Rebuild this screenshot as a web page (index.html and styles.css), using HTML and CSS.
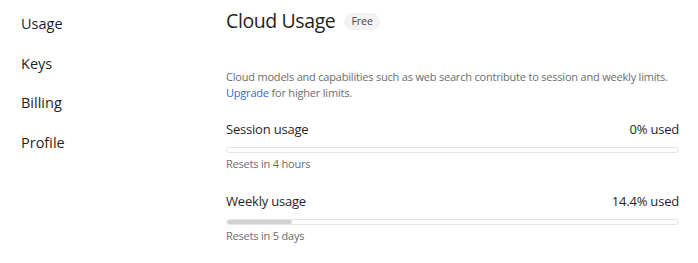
FILE: index.html
```html
<!DOCTYPE html>
<html lang="en">
<head>
  <meta charset="UTF-8" />
  <meta name="viewport" content="width=device-width, initial-scale=1.0"/>
  <title>Cloud Usage</title>
  <link rel="stylesheet" href="styles.css">
</head>
<body>
  <div class="layout">
    <nav class="sidebar">
      <a href="#" class="nav-item">Usage</a>
      <a href="#" class="nav-item">Keys</a>
      <a href="#" class="nav-item">Billing</a>
      <a href="#" class="nav-item">Profile</a>
    </nav>

    <main class="content">
      <div class="title-row">
        <h1>Cloud Usage</h1>
        <span class="badge">Free</span>
      </div>

      <p class="desc">
        Cloud models and capabilities such as web search contribute to session and weekly limits.<br>
        <a href="#" class="link">Upgrade</a> for higher limits.
      </p>

      <section class="meter">
        <div class="meter-head">
          <span>Session usage</span>
          <span>0% used</span>
        </div>
        <div class="bar"><div class="fill" style="width: 0%"></div></div>
        <div class="note">Resets in 4 hours</div>
      </section>

      <section class="meter">
        <div class="meter-head">
          <span>Weekly usage</span>
          <span>14.4% used</span>
        </div>
        <div class="bar"><div class="fill" style="width: 14.4%"></div></div>
        <div class="note">Resets in 5 days</div>
      </section>
    </main>
  </div>
</body>
</html>
```

FILE: styles.css
```css
:root {
  --text: #1f1f1f;
  --muted: #6c6c6c;
  --border: #e6e6e6;
  --link: #2f6ad8;
}

body {
  margin: 0;
  font-family: 'Open Sans', 'Noto Sans', sans-serif;
  color: var(--text);
  background: #fff;
}

.layout {
  display: flex;
}

.sidebar {
  width: 226px;
  flex-shrink: 0;
  padding: 14px 0 0 21px;
  box-sizing: border-box;
  display: flex;
  flex-direction: column;
  gap: 19.5px;
}

.nav-item {
  font-size: 14.5px;
  line-height: 20px;
  color: var(--text);
  text-decoration: none;
}

.content {
  width: 453px;
  padding-top: 8px;
}

.title-row {
  display: flex;
  align-items: center;
  gap: 9px;
  height: 26px;
}

h1 {
  margin: 0;
  font-size: 19.5px;
  font-weight: 400;
  line-height: 26px;
  letter-spacing: -0.4px;
}

.badge {
  background: #f2f2f2;
  border-radius: 9px;
  font-size: 10.5px;
  line-height: 17px;
  padding: 0 7px;
  color: #444;
}

.desc {
  margin: 35px 0 0;
  font-size: 11px;
  line-height: 16px;
  letter-spacing: -0.2px;
  color: var(--muted);
}

.link {
  color: var(--link);
  text-decoration: none;
}

.meter {
  margin-top: 19px;
}

.meter + .meter {
  margin-top: 20px;
}

.meter-head {
  display: flex;
  justify-content: space-between;
  font-size: 13px;
  line-height: 18px;
  letter-spacing: -0.2px;
}

.bar {
  margin-top: 9px;
  height: 4px;
  border: 1px solid var(--border);
  border-radius: 4px;
  overflow: hidden;
}

.fill {
  height: 100%;
  background: #d2d2d2;
  border-radius: 4px;
}

.note {
  margin-top: 3px;
  font-size: 11px;
  line-height: 16px;
  letter-spacing: -0.2px;
  color: var(--muted);
}
```
